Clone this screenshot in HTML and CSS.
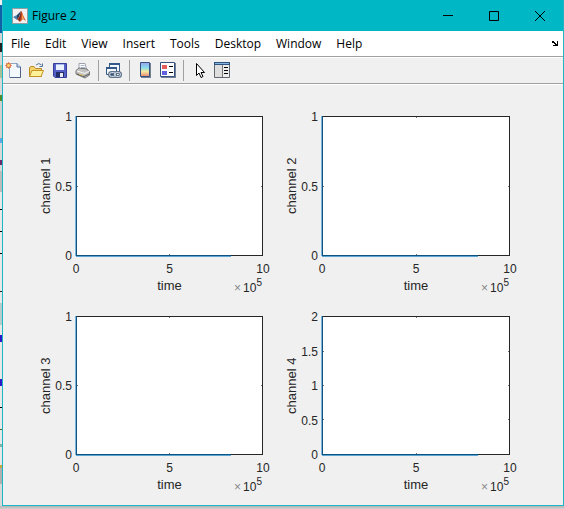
FILE: index.html
```html
<!DOCTYPE html>
<html lang="en">
<head>
<meta charset="utf-8">
<title>Figure 2</title>
<link rel="stylesheet" href="styles.css">
</head>
<body>
<div class="window">
  <header class="titlebar">
    <svg class="logo" width="16" height="16" viewBox="0 0 16 16">
      <rect width="16" height="16" fill="#8f9fa6"/><rect x="1" y="1" width="14" height="14" fill="#f1f1f1"/>
      <path d="M1 9 5 7 7 8 5 12Z" fill="#477fae"/><path d="M5 7 9 3 7 9 5 12Z" fill="#263f64"/>
      <path d="M9 3Q10 3 11 7L14 13 11 11 8 14 5 11Q8 9 9 3Z" fill="#d4572a"/><path d="M9 3Q10 6 8 13L6 12Q8 9 9 3Z" fill="#7c2922"/><path d="M10 6 12 11 10 11Z" fill="#f3a647"/>
    </svg>
    <h1>Figure 2</h1>
    <div class="controls">
      <button aria-label="Minimize"><svg width="10" height="10"><path d="M0 4.500H10" stroke="#000"/></svg></button>
      <button aria-label="Maximize"><svg width="10" height="10"><path d="M.5.5h9v9h-9z" fill="none" stroke="#000"/></svg></button>
      <button aria-label="Close"><svg width="10" height="10"><path d="M0 0 10 10M10 0 0 10" stroke="#000"/></svg></button>
    </div>
  </header>
  <nav class="menu">
    <button>File</button><button>Edit</button><button>View</button><button>Insert</button><button>Tools</button><button>Desktop</button><button>Window</button><button>Help</button>
    <button class="dock" aria-label="Dock figure"><svg width="7" height="6" shape-rendering="crispEdges"><path d="M1 0h2v1h1v1h1v1h1V0h1v5H2V4h2V3H3V2H1V1H0z"/></svg></button>
  </nav>
  <div class="toolbar">
    <button aria-label="New figure"><svg width="18" height="18" viewBox="0 0 18 18"><path d="M4.500 1.500H12L15.500 5V15.500H4.500Z" fill="#f4f9ff" stroke="#8ba5c9"/><path d="M5 15.500H15.500V5" fill="none" stroke="#4e6589"/><path d="M12 1.500V5H15.500" fill="#c9def7" stroke="#56719a"/><path d="M1 1 6 6M6 1 1 6M3.500 0V7M0 3.500H7" stroke="#e89165"/><circle cx="3.500" cy="3.500" r="2" fill="#ffd66b" stroke="#d65d3c"/></svg></button>
    <button aria-label="Open"><svg width="18" height="18" viewBox="0 0 18 18"><path d="M1.500 14.500V5.500L3 4.500H6L7.500 6.500H13.500V14.500Z" fill="#f5d36c" stroke="#b98a24"/><path d="M1.500 14.500 4 8.500H15.500L13 14.500Z" fill="#fff09a" stroke="#c39324"/><path d="M8 3Q11 0 13.500 3M11.500 4.500H14.500V1.500" fill="none" stroke="#58779e"/></svg></button>
    <button aria-label="Save"><svg width="18" height="18" viewBox="0 0 18 18"><path d="M2.500 1.500H15.500V15.500H4L2.500 14Z" fill="#5560c7" stroke="#343e9b"/><path d="M5 2H13V8H5Z" fill="#e9f1ff"/><path d="M5 2H13V3H5Z" fill="#a4b8e9"/><path d="M5 10H13V15H5Z" fill="#252d68"/><path d="M9 11H12V15H9Z" fill="#e8eaf3"/></svg></button>
    <button aria-label="Print"><svg width="18" height="18" viewBox="0 0 18 18"><path d="M5 7 5 1.500 11 1.500 12.500 7Z" fill="#fff" stroke="#9aa1ad"/><path d="M6.500 3.500H10.500M7 5.500H11" stroke="#a9b9d0"/><path d="M2 8.500 5 6 13 7 15.500 10V13L11 16 2 12Z" fill="#c2c2c2" stroke="#777"/><path d="M3 9 11 11.500 15 9" fill="none" stroke="#f7f7f7"/><path d="M3 12 10 14.500 15 12" fill="none" stroke="#555"/><path d="M5 12 9 13.500" stroke="#e7c958"/></svg></button>
    <i class="sep"></i>
    <button aria-label="Link plot"><svg width="18" height="18" viewBox="0 0 18 18"><path d="M4.500 1.500H14.500V9.500H4.500Z" fill="#f4f7fc" stroke="#345887"/><path d="M4 2H15" stroke="#345887" stroke-width="2"/><path d="M1.500 5.500H11.500V12.500H1.500Z" fill="#f4f7fc" stroke="#345887"/><path d="M1 6H12" stroke="#345887" stroke-width="2"/><g fill="none" stroke="#5c7087" stroke-width="3"><rect x="4.500" y="10.500" width="6" height="4" rx="2"/><rect x="9.500" y="10.500" width="6" height="4" rx="2"/></g><g fill="none" stroke="#d0dbe7"><rect x="4.500" y="10.500" width="6" height="4" rx="2"/><rect x="9.500" y="10.500" width="6" height="4" rx="2"/></g></svg></button>
    <i class="sep"></i>
    <button aria-label="Insert colorbar"><svg width="18" height="18" viewBox="0 0 18 18"><defs><linearGradient id="spectrum" x2="0" y2="1"><stop stop-color="#a2a0ef"/><stop offset=".35" stop-color="#83d9ed"/><stop offset=".65" stop-color="#f4e9a0"/><stop offset="1" stop-color="#e9846e"/></linearGradient></defs><path d="M5 1H15V16H5Z" fill="#748096"/><path d="M4.500 .5H13.500V14.500H4.500Z" fill="url(#spectrum)" stroke="#34517f"/></svg></button>
    <button aria-label="Insert legend"><svg width="18" height="18" viewBox="0 0 18 18"><path d="M2 1H17V16H2Z" fill="#748096"/><path d="M1.500 .5H15.500V14.500H1.500Z" fill="#fff" stroke="#34517f"/><path d="M3 3H8V7H3Z" fill="#e55d5d"/><path d="M3 9H8V13H3Z" fill="#6262e1"/><path d="M10 4.500H14M10 10.500H14" stroke="#000"/></svg></button>
    <i class="sep"></i>
    <button aria-label="Edit plot"><svg width="18" height="18" viewBox="0 0 18 18"><path d="M6.500 1.500V13.500L9 11 11 15.500 13 14.500 11 10.500H14.500Z" fill="#fff" stroke="#000"/></svg></button>
    <button aria-label="Open property inspector"><svg width="18" height="18" viewBox="0 0 18 18"><path d="M1.500 1.500H16.500V15.500H1.500Z" fill="#eee" stroke="#606770"/><path d="M1 0H17V3H1Z" fill="#31547e"/><path d="M2 1H16V2H2Z" fill="#86b5df"/><path d="M2 3H9V15H2Z" fill="#dedede"/><path d="M9.500 3V15" stroke="#777"/><path d="M11 5.500H15M11 8.500H15M11 11.500H15" stroke="#000"/></svg></button>
  </div>
  <main class="figure">
    <section class="chart">
      <div class="ylabel">channel 1</div>
      <div class="yticks"><span>1</span><span>0.5</span><span>0</span></div>
      <div class="plot halves"><i class="trace"></i></div>
      <div class="xaxis"><div class="xticks"><span>0</span><span>5</span><span>10</span></div><div class="xlabel">time</div><div class="exponent"><span class="times">×</span>10<sup>5</sup></div></div>
    </section>
    <section class="chart">
      <div class="ylabel">channel 2</div>
      <div class="yticks"><span>1</span><span>0.5</span><span>0</span></div>
      <div class="plot halves"><i class="trace"></i></div>
      <div class="xaxis"><div class="xticks"><span>0</span><span>5</span><span>10</span></div><div class="xlabel">time</div><div class="exponent"><span class="times">×</span>10<sup>5</sup></div></div>
    </section>
    <section class="chart">
      <div class="ylabel">channel 3</div>
      <div class="yticks"><span>1</span><span>0.5</span><span>0</span></div>
      <div class="plot halves"><i class="trace"></i></div>
      <div class="xaxis"><div class="xticks"><span>0</span><span>5</span><span>10</span></div><div class="xlabel">time</div><div class="exponent"><span class="times">×</span>10<sup>5</sup></div></div>
    </section>
    <section class="chart">
      <div class="ylabel">channel 4</div>
      <div class="yticks"><span>2</span><span>1.5</span><span>1</span><span>0.5</span><span>0</span></div>
      <div class="plot quarters"><i class="trace"></i></div>
      <div class="xaxis"><div class="xticks"><span>0</span><span>5</span><span>10</span></div><div class="xlabel">time</div><div class="exponent"><span class="times">×</span>10<sup>5</sup></div></div>
    </section>
  </main>
</div>
</body>
</html>
```
FILE: styles.css
```css
* { box-sizing: border-box; }
body {
  margin: 0;
  min-height: 100vh;
  display: flex;
  padding: 0 0 3px 2px;
  background: linear-gradient(#b4b4b4, #d0d0d0) bottom / 100% 3px no-repeat,
    linear-gradient(#f0f0f0 0 5px, #0d62a8 5px 33px, #d4d4d4 33px 43px, #222 43px 52px, #d4d4d4 52px 65px, #a9bf95 65px 78px,
      #d8d8d8 78px 95px, #4f8a2c 95px 101px, #d0d0d0 101px 138px, #5aa9e8 138px 143px, #d8d8d8 143px 160px, #6b2a68 160px 165px,
      #d8d8d8 165px 171px, #bcbcbc 171px 192px, #e8e8e8 192px 209px, #000 209px 210px, #e8e8e8 210px 231px, #000 231px 232px,
      #e8e8e8 232px 253px, #000 253px 254px, #e8e8e8 254px 291px, #222 291px 292px, #e8e8e8 292px 303px, #b5cdca 303px 325px,
      #e8e8e8 325px 335px, #2a18c8 335px 342px, #e8e8e8 342px 379px, #2a18c8 379px 386px, #e8e8e8 386px 407px, #000 407px 408px,
      #e8e8e8 408px 429px, #3a6b2a 429px 430px, #e8e8e8 430px 444px, #7fb5a8 444px 447px, #e8e8e8 447px 465px, #c8a83a 465px 468px,
      #b0b0b0 468px 484px, #d8d8d8 484px);
  font-family: "Open Sans", "Noto Sans", sans-serif;
  font-size: 12px;
  color: #000;
}
button { border: 0; padding: 0; background: none; font: inherit; color: inherit; }
svg { display: block; }
.window {
  flex: 1;
  display: flex;
  flex-direction: column;
  border: 1px solid #1fb5c4;
  border-top: 0;
  background: #f0f0f0;
}
.titlebar {
  display: flex;
  align-items: center;
  height: 31px;
  padding-left: 9px;
  gap: 4px;
  background: #00b7c6;
}
h1 { margin: 0; font-size: 12px; font-weight: 400; }
.controls { display: flex; margin-left: auto; align-self: stretch; }
.controls button { width: 46px; display: flex; align-items: center; justify-content: center; }
.menu { display: flex; align-items: center; height: 25px; padding: 0 5px 0 8px; gap: 15px; background: #fff; }
.dock { margin-left: auto; }
.toolbar {
  display: flex;
  align-items: center;
  height: 29px;
  padding: 0 2px;
  gap: 5px;
  border-top: 1px solid #a0a0a0;
  border-bottom: 1px solid #fff;
  box-shadow: inset 0 1px #fff, inset 0 -1px #a0a0a0;
}
.sep { width: 1px; height: 21px; background: #a0a0a0; margin: 0 1px; }
.figure {
  flex: 1;
  display: grid;
  grid-template-columns: 225fr 226fr;
  grid-template-rows: 190fr 189fr;
  gap: 10px 21px;
  padding: 31px 53px 0 35px;
  font-family: "Liberation Sans", sans-serif;
  color: #262626;
}
.chart { display: grid; grid-template-columns: 16px 22px 1fr; grid-template-rows: minmax(100px, 1fr) 50px; }
.ylabel { writing-mode: vertical-rl; transform: rotate(180deg); text-align: center; font-size: 13px; line-height: 16px; }
.yticks { display: flex; flex-direction: column; justify-content: space-between; align-items: flex-end; padding-right: 4px; }
.yticks span { height: 1px; line-height: 2px; }
.plot { position: relative; background: #fff; border: 1px solid #262626; }
.plot::before, .plot::after { content: ""; position: absolute; }
.plot::before { inset: 0; background:
  linear-gradient(#777, #777) 50% 0 / 1px 1px no-repeat,
  linear-gradient(#777, #777) 50% 100% / 1px 1px no-repeat; }
.halves::after, .quarters::after { inset: 0; background:
  linear-gradient(#777, #777) 0 50% / 1px 1px no-repeat,
  linear-gradient(#777, #777) 100% 50% / 1px 1px no-repeat; }
.quarters::after { background:
  linear-gradient(#777, #777) 0 25% / 1px 1px no-repeat,
  linear-gradient(#777, #777) 0 50% / 1px 1px no-repeat,
  linear-gradient(#777, #777) 0 75% / 1px 1px no-repeat,
  linear-gradient(#777, #777) 100% 25% / 1px 1px no-repeat,
  linear-gradient(#777, #777) 100% 50% / 1px 1px no-repeat,
  linear-gradient(#777, #777) 100% 75% / 1px 1px no-repeat; }
.trace {
  position: absolute;
  z-index: 1;
  inset: -1px 31px -1px -1px;
  border: solid #0e527f;
  border-width: 0 0 1px 1px;
  box-shadow: -1px 0 #79b5dc, 0 1px #5ba5d4;
}
.xaxis { grid-column: 3; display: grid; grid-template-rows: 16px 18px; padding-top: 5px; }
.xticks { grid-area: 1 / 1; display: flex; justify-content: space-between; line-height: 16px; }
.xticks span { width: 0; display: flex; justify-content: center; }
.xlabel { grid-area: 2 / 1; text-align: center; font-size: 13px; line-height: 18px; }
.exponent { grid-area: 2 / 1; justify-self: end; padding: 2px 1px 0 0; line-height: 18px; }
.times { color: #888; margin-right: 2px; }
sup { font-size: 10px; line-height: 0; vertical-align: 6px; }
```
